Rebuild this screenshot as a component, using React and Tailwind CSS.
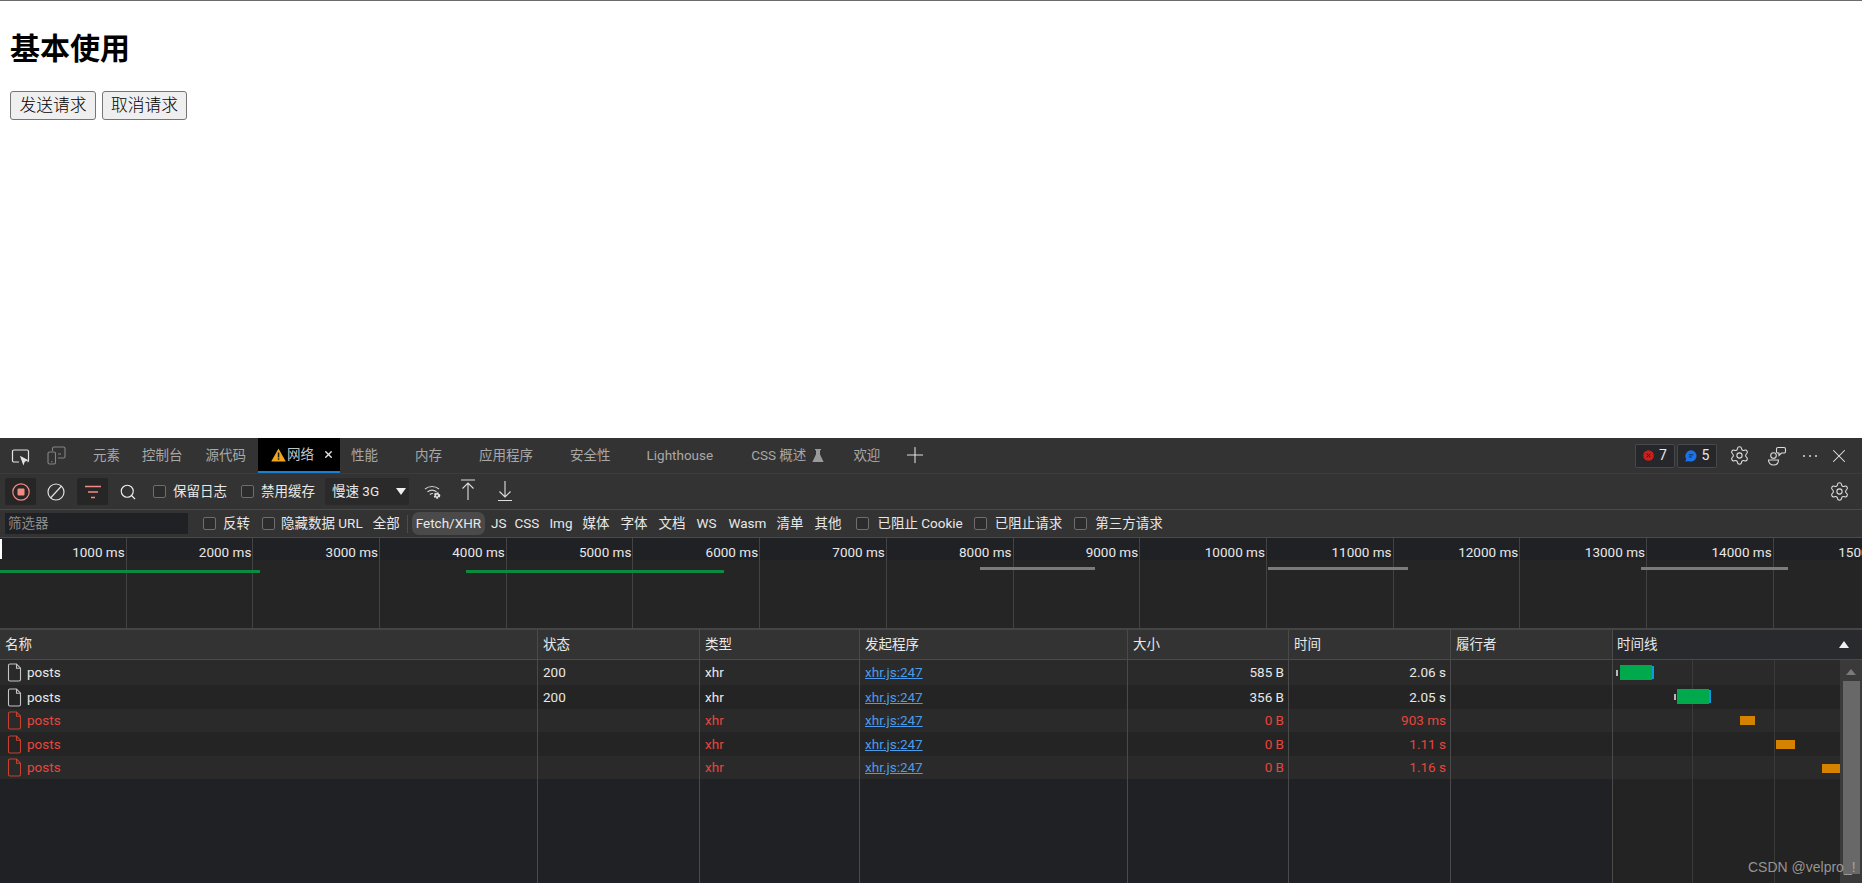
import { Settings, X, Plus, Search } from "lucide-react";

const FONT = "font-['Roboto','Noto_Sans_CJK_SC',sans-serif]";

const tabs = [
  { label: "元素", ml: "ml-0" },
  { label: "控制台", ml: "ml-[22px]" },
  { label: "源代码", ml: "ml-[23px]" },
];
const tabsAfter = [
  { label: "性能", ml: "ml-[11px]" },
  { label: "内存", ml: "ml-[37px]" },
  { label: "应用程序", ml: "ml-[37px]" },
  { label: "安全性", ml: "ml-[37px]" },
  { label: "Lighthouse", ml: "ml-[36px]" },
];

const filters = [
  { label: "JS", ml: "ml-[6px]" },
  { label: "CSS", ml: "ml-[8px]" },
  { label: "Img", ml: "ml-[10px]" },
  { label: "媒体", ml: "ml-[10px]" },
  { label: "字体", ml: "ml-[11px]" },
  { label: "文档", ml: "ml-[11px]" },
  { label: "WS", ml: "ml-[11px]" },
  { label: "Wasm", ml: "ml-[12px]" },
  { label: "清单", ml: "ml-[10px]" },
  { label: "其他", ml: "ml-[11px]" },
];

const ticks = Array.from({ length: 15 }, (_, i) => `${(i + 1) * 1000} ms`);

const columns = [
  { title: "名称" },
  { title: "状态" },
  { title: "类型" },
  { title: "发起程序" },
  { title: "大小" },
  { title: "时间" },
  { title: "履行者" },
];

const rows = [
  { status: "200", size: "585 B", time: "2.06 s", failed: false, bg: "bg-[#2a2a2a]", h: "h-[25px]" },
  { status: "200", size: "356 B", time: "2.05 s", failed: false, bg: "bg-[#242424]", h: "h-[24px]" },
  { status: "", size: "0 B", time: "903 ms", failed: true, bg: "bg-[#2a2a2a]", h: "h-[23px]" },
  { status: "", size: "0 B", time: "1.11 s", failed: true, bg: "bg-[#242424]", h: "h-[24px]" },
  { status: "", size: "0 B", time: "1.16 s", failed: true, bg: "bg-[#2a2a2a]", h: "h-[23px]" },
];

const Checkbox = ({ className = "" }) => (
  <span className={`inline-block w-[13px] h-[13px] rounded-[2px] border border-[#6e6e6e] bg-[#2c2c2c] shrink-0 ${className}`} />
);

const FileIcon = ({ color }) => (
  <svg width="15" height="19" viewBox="0 0 15 19" fill="none" stroke={color} strokeWidth="1.1" className="shrink-0">
    <path d="M1.5 2.5a1.5 1.5 0 0 1 1.5-1.5h6.5l4 4.2v11.3a1.5 1.5 0 0 1-1.5 1.5H3a1.5 1.5 0 0 1-1.5-1.5z" />
    <path d="M9.5 1v4.2h4" />
  </svg>
);

const TopBar = () => (
  <div className="flex items-center h-[36px] border-b border-[#3c3c3c] bg-[#333333] text-[#a8a8a8]">
    {/* inspeccionar */}
    <svg width="20" height="18" viewBox="0 0 20 18" fill="none" stroke="#e4e4e4" strokeWidth="1.2" className="ml-[11px] mt-[3px] shrink-0">
      <path d="M8 14H3a1.5 1.5 0 0 1-1.5-1.5v-9A1.5 1.5 0 0 1 3 2h13a1.5 1.5 0 0 1 1.5 1.5v9a1.5 1.5 0 0 1-1 1.4" />
      <path d="M10 9l6 3.2-2.6.9-1 2.6z" fill="#e4e4e4" />
    </svg>
    {/* dispositivo */}
    <svg width="19" height="19" viewBox="0 0 19 19" fill="none" stroke="#858585" strokeWidth="1.1" className="ml-[16px] shrink-0">
      <path d="M5.5 5V2.5A1.5 1.5 0 0 1 7 1h9.5A1.5 1.5 0 0 1 18 2.5v8a1.5 1.5 0 0 1-1.5 1.5H11" />
      <rect x="1" y="6" width="7.5" height="12" rx="1.5" />
      <path d="M4 15.8h1.5M11 8h3" />
    </svg>
    <div className="flex items-center ml-[27px] text-[13.5px]">
      {tabs.map((tab) => (
        <span key={tab.label} className={tab.ml}>{tab.label}</span>
      ))}
    </div>
    <div className="flex items-center ml-[12px] w-[82px] h-[35px] self-start bg-black border-b-2 border-[#1a7fd0] text-[#c4c4c4] text-[13.5px] pl-[13px]">
      <svg width="15" height="14" viewBox="0 0 15 14" className="shrink-0">
        <path d="M7.5 0.5L14.8 13.5H0.2z" fill="#f3a81c" />
        <rect x="6.8" y="4.5" width="1.5" height="5" fill="#1c1c1c" />
        <rect x="6.8" y="10.3" width="1.5" height="1.5" fill="#1c1c1c" />
      </svg>
      <span className="ml-[1px]">网络</span>
      <X size={11} strokeWidth={3} className="ml-[9px] text-[#e8e8e8]" />
    </div>
    <div className="flex items-center text-[13.5px]">
      {tabsAfter.map((tab) => (
        <span key={tab.label} className={tab.ml}>{tab.label}</span>
      ))}
      <span className="ml-[38px]">CSS 概述</span>
      <svg width="12" height="13" viewBox="0 0 12 13" className="ml-[6px]" fill="#9a9a9a">
        <path d="M3 0h6v1.2H8v4l3.6 7.8H.4L4 5.200V1.200H3z" />
      </svg>
      <span className="ml-[29px]">欢迎</span>
    </div>
    <Plus size={26} strokeWidth={1} className="ml-[22px] text-[#e0e0e0] -mt-[2px]" />
    <div className="ml-auto flex items-center">
      <div className="flex items-center justify-center gap-[5px] w-[40px] h-[24px] rounded-[2px] border border-[#46484c] bg-[#25272b] text-[#e8e8e8] text-[14px]">
        <svg width="11" height="11" viewBox="0 0 11 11">
          <circle cx="5.500" cy="5.500" r="5.300" fill="#c5221f" />
          <path d="M3.800 3.800l3.400 3.400M7.200 3.800l-3.400 3.400" stroke="#2a1010" strokeWidth="1" />
        </svg>
        7
      </div>
      <div className="flex items-center justify-center gap-[5px] w-[40px] h-[24px] ml-[2px] rounded-[2px] border border-[#46484c] bg-[#25272b] text-[#e8e8e8] text-[14px]">
        <svg width="12" height="12" viewBox="0 0 12 12">
          <path d="M6 .3a5.600 5.600 0 1 1-2.600 10.600L.4 11.700l.8-2.900A5.600 5.600 0 0 1 6 .3z" fill="#1a73e8" />
          <path d="M3.800 4.800h4.400M3.800 7h3" stroke="#0d2c55" strokeWidth="1" />
        </svg>
        5
      </div>
      <Settings size={21} strokeWidth={1.2} className="ml-[12px] text-[#e0e0e0]" />
      <svg width="20" height="20" viewBox="0 0 20 20" fill="none" stroke="#dcdcdc" strokeWidth="1.1" className="ml-[17px]">
        <circle cx="6.500" cy="9.500" r="2.800" />
        <path d="M1.500 14h10c0 3-2 5-5 5s-5-2-5-5z" />
        <path d="M11 1.500h6a1.500 1.500 0 0 1 1.500 1.500v2.500A1.500 1.500 0 0 1 17 7h-2.500L12 9.500V7h-1a1.500 1.500 0 0 1-1.500-1.500V3A1.500 1.500 0 0 1 11 1.500z" />
      </svg>
      <svg width="16" height="4" viewBox="0 0 16 4" fill="#dcdcdc" className="ml-[15px]">
        <circle cx="2" cy="2" r="1" />
        <circle cx="8" cy="2" r="1" />
        <circle cx="14" cy="2" r="1" />
      </svg>
      <X size={22} strokeWidth={1.1} className="ml-[10px] mr-[12px] text-[#e8e8e8]" />
    </div>
  </div>
);

const Toolbar = () => (
  <div className="flex items-center h-[36px] border-b border-[#4a4a4a] bg-[#333333] text-[#e8e8e8] text-[13.5px]">
    <div className="flex items-center justify-center ml-[5px] w-[31px] h-[27px] rounded-[2px] bg-[#262626]">
      <svg width="18" height="18" viewBox="0 0 18 18">
        <circle cx="9" cy="9" r="8.200" fill="none" stroke="#f28b82" strokeWidth="1.200" />
        <rect x="5.500" y="5.500" width="7" height="7" rx="1" fill="#f28b82" />
      </svg>
    </div>
    <svg width="18" height="18" viewBox="0 0 18 18" fill="none" stroke="#e0e0e0" strokeWidth="1.200" className="ml-[11px]">
      <circle cx="9" cy="9" r="8" />
      <path d="M14.500 3L3.500 15" />
    </svg>
    <div className="flex items-center justify-center ml-[12px] w-[31px] h-[27px] rounded-[2px] bg-[#262626]">
      <svg width="18" height="14" viewBox="0 0 18 14" stroke="#f28b82" strokeWidth="1.300">
        <path d="M1 1.500h16M4 7h10M7 12.500h4" />
      </svg>
    </div>
    <Search size={18} strokeWidth={1.5} className="ml-[11px] text-[#f0f0f0]" />
    <Checkbox className="ml-[16px]" />
    <span className="ml-[7px]">保留日志</span>
    <Checkbox className="ml-[14px]" />
    <span className="ml-[7px]">禁用缓存</span>
    <div className="flex items-center justify-between ml-[10px] w-[84px] h-[27px] pl-[7px] pr-[2px] rounded-[2px] bg-[#2a2a2a]">
      <span>慢速 3G</span>
      <svg width="10" height="7" viewBox="0 0 10 7" fill="#f0f0f0" className="mr-[1px]">
        <path d="M0 0h10L5 7z" />
      </svg>
    </div>
    <svg width="18" height="17" viewBox="0 0 18 17" fill="none" stroke="#d0d0d0" strokeWidth="1.100" className="ml-[15px]">
      <path d="M1 6a11 11 0 0 1 14 0M3.500 8.800a7.500 7.500 0 0 1 9 0M6 11.500a3.500 3.500 0 0 1 3-1" />
      <circle cx="13" cy="12.500" r="2.400" fill="#e0e0e0" stroke="#e0e0e0" strokeDasharray="1.500 1" strokeWidth="1.800" />
      <circle cx="13" cy="12.500" r="0.900" fill="#333333" stroke="none" />
    </svg>
    <svg width="16" height="22" viewBox="0 0 16 22" fill="none" stroke="#dedede" strokeWidth="1.100" className="ml-[18px] -mt-[3px]">
      <path d="M1 1h14M8 4v17M2.500 9.500L8 4l5.500 5.500" />
    </svg>
    <svg width="16" height="22" viewBox="0 0 16 22" fill="none" stroke="#dedede" strokeWidth="1.100" className="ml-[21px] -mt-[1px]">
      <path d="M8 1v16M2.500 11.500L8 17l5.500-5.500M1 20.500h14" />
    </svg>
    <Settings size={21} strokeWidth={1.2} className="ml-auto mr-[12px] text-[#e0e0e0]" />
  </div>
);

const FilterBar = () => (
  <div className="flex items-center h-[28px] border-b border-[#4a4a4a] bg-[#333333] text-[#e8e8e8] text-[13.5px]">
    <div className="flex items-center ml-[5px] w-[183px] h-[21px] pl-[3px] bg-[#202124] text-[#8b8b8b]">筛选器</div>
    <Checkbox className="ml-[15px]" />
    <span className="ml-[7px]">反转</span>
    <Checkbox className="ml-[12px]" />
    <span className="ml-[6px]">隐藏数据 URL</span>
    <span className="ml-[10px]">全部</span>
    <span className="ml-[7px] w-px h-[18px] bg-[#4d4d4d]" />
    <span className="flex items-center ml-[4px] h-[23px] px-[4px] rounded-[7px] bg-[#4a4a4a]">Fetch/XHR</span>
    {filters.map((item) => (
      <span key={item.label} className={item.ml}>{item.label}</span>
    ))}
    <Checkbox className="ml-[15px]" />
    <span className="ml-[8px]">已阻止 Cookie</span>
    <Checkbox className="ml-[11px]" />
    <span className="ml-[8px]">已阻止请求</span>
    <Checkbox className="ml-[12px]" />
    <span className="ml-[8px]">第三方请求</span>
  </div>
);

const Overview = () => (
  <div className="relative flex h-[92px] border-b-2 border-[#454545] bg-[#252525] overflow-hidden text-[13.5px] text-[#e8e8e8]">
    <div className="absolute left-0 right-0 top-0 h-[22px] bg-[#202124]" />
    {ticks.map((tick) => (
      <div key={tick} className="relative shrink-0 w-[126.7px] h-full border-r border-[#434343] text-right pr-[1px] pt-[6px] leading-[16px]">
        {tick}
      </div>
    ))}
    <span className="absolute left-0 top-[1px] w-[2px] h-[20px] bg-white" />
    <span className="absolute left-0 top-[32px] w-[260px] h-[3px] bg-[#0b8a40]" />
    <span className="absolute left-[466px] top-[32px] w-[258px] h-[3px] bg-[#0b8a40]" />
    <span className="absolute left-[980px] top-[29px] w-[115px] h-[3px] bg-[#7b7b7b]" />
    <span className="absolute left-[1268px] top-[29px] w-[140px] h-[3px] bg-[#7b7b7b]" />
    <span className="absolute left-[1641px] top-[29px] w-[147px] h-[3px] bg-[#7b7b7b]" />
  </div>
);

const cellBorder = "border-r border-[#4a4a4a]";

const Table = () => (
  <div className="flex flex-col flex-1 min-h-0 text-[13.5px]">
    <div className="grid grid-cols-[538px_162px_160px_268px_161px_162px_162px_1fr] h-[30px] border-b border-[#4a4a4a] bg-[#333333] text-[#e8e8e8]">
      {columns.map((col) => (
        <div key={col.title} className={`flex items-center pl-[5px] ${cellBorder}`}>{col.title}</div>
      ))}
      <div className="flex items-center justify-between pl-[4px] pr-[13px] bg-[#292a2d]">
        时间线
        <svg width="10" height="7" viewBox="0 0 10 7" fill="#f0f0f0">
          <path d="M5 0l5 7H0z" />
        </svg>
      </div>
    </div>
    <div className="relative flex-1 min-h-0 flex bg-[#202124]">
      <div className="flex-1 min-w-0 flex flex-col">
        {rows.map((row, i) => {
          const text = row.failed ? "text-[#e8453c]" : "text-[#e8e8e8]";
          return (
            <div key={i} className={`grid grid-cols-[538px_162px_160px_268px_161px_162px_162px_1fr] items-stretch ${row.h} ${row.bg} ${text}`}>
              <div className={`flex items-center pl-[7px] ${cellBorder}`}>
                <FileIcon color={row.failed ? "#c8412f" : "#c4c4c4"} />
                <span className="ml-[5px]">posts</span>
              </div>
              <div className={`flex items-center pl-[5px] ${cellBorder}`}>{row.status}</div>
              <div className={`flex items-center pl-[5px] ${cellBorder}`}>xhr</div>
              <div className={`flex items-center pl-[5px] ${cellBorder}`}>
                <span className="text-[#4c9be8] underline">xhr.js:247</span>
              </div>
              <div className={`flex items-center justify-end pr-[4px] ${cellBorder}`}>{row.size}</div>
              <div className={`flex items-center justify-end pr-[4px] ${cellBorder}`}>{row.time}</div>
              <div className={cellBorder} />
              <div />
            </div>
          );
        })}
        {/* columnas vacias hasta abajo */}
        <div className="flex-1 grid grid-cols-[538px_162px_160px_268px_161px_162px_162px_1fr]">
          {columns.map((col) => (
            <div key={col.title} className={cellBorder} />
          ))}
          <div className="bg-[#232323]" />
        </div>
      </div>
      {/* barras del waterfall */}
      <div className="absolute left-[1612px] top-0 bottom-0 w-[228px] overflow-hidden">
        <span className="absolute left-[80px] top-0 bottom-0 w-px bg-[#3a3a3a]" />
        <span className="absolute left-[162px] top-0 bottom-0 w-px bg-[#3a3a3a]" />
        <span className="absolute left-[4px] top-[10px] w-[2px] h-[6px] bg-[#b8b8b8]" />
        <span className="absolute left-[8px] top-[5px] w-[32px] h-[15px] bg-[#00aa4c]" />
        <span className="absolute left-[40px] top-[6px] w-[2px] h-[13px] bg-[#1098e0]" />
        <span className="absolute left-[62px] top-[34px] w-[2px] h-[6px] bg-[#b8b8b8]" />
        <span className="absolute left-[65px] top-[29px] w-[32px] h-[15px] bg-[#00aa4c]" />
        <span className="absolute left-[97px] top-[30px] w-[2px] h-[13px] bg-[#1098e0]" />
        <span className="absolute left-[128px] top-[56px] w-[15px] h-[9px] bg-[#d48200]" />
        <span className="absolute left-[164px] top-[80px] w-[19px] h-[9px] bg-[#d48200]" />
        <span className="absolute left-[210px] top-[104px] w-[18px] h-[9px] bg-[#d48200]" />
      </div>
      {/* scrollbar */}
      <div className="flex flex-col items-center w-[22px] shrink-0 bg-[#3a3a3a]">
        <svg width="10" height="6" viewBox="0 0 10 6" fill="#7a7a7a" className="mt-[9px] shrink-0">
          <path d="M5 0l5 6H0z" />
        </svg>
        <div className="mt-[6px] w-[17px] h-[193px] bg-[#686868]" />
      </div>
    </div>
  </div>
);

export default function App() {
  return (
    <div className={`relative flex flex-col w-[1862px] h-[883px] overflow-hidden bg-white ${FONT}`}>
      <div className="h-[438px] shrink-0 border-t border-[#6b6b6b] pl-[10px] text-black">
        <h1 className="mt-[28px] text-[30px] leading-[40px] font-bold">基本使用</h1>
        <div className="flex gap-[6px] mt-[22px]">
          <button className="h-[29px] w-[86px] rounded-[3px] border border-[#767676] bg-[#efefef] text-[16.8px] leading-none font-light">发送请求</button>
          <button className="h-[29px] w-[85px] rounded-[3px] border border-[#767676] bg-[#efefef] text-[16.8px] leading-none font-light">取消请求</button>
        </div>
      </div>
      <div className="flex flex-col flex-1 min-h-0 bg-[#202124]">
        <TopBar />
        <Toolbar />
        <FilterBar />
        <Overview />
        <Table />
      </div>
      <span className="absolute left-[1748px] top-[857px] text-[14px] font-['Liberation_Sans',sans-serif] text-[#b4b4b4]/80">CSDN @velpro_!</span>
    </div>
  );
}
